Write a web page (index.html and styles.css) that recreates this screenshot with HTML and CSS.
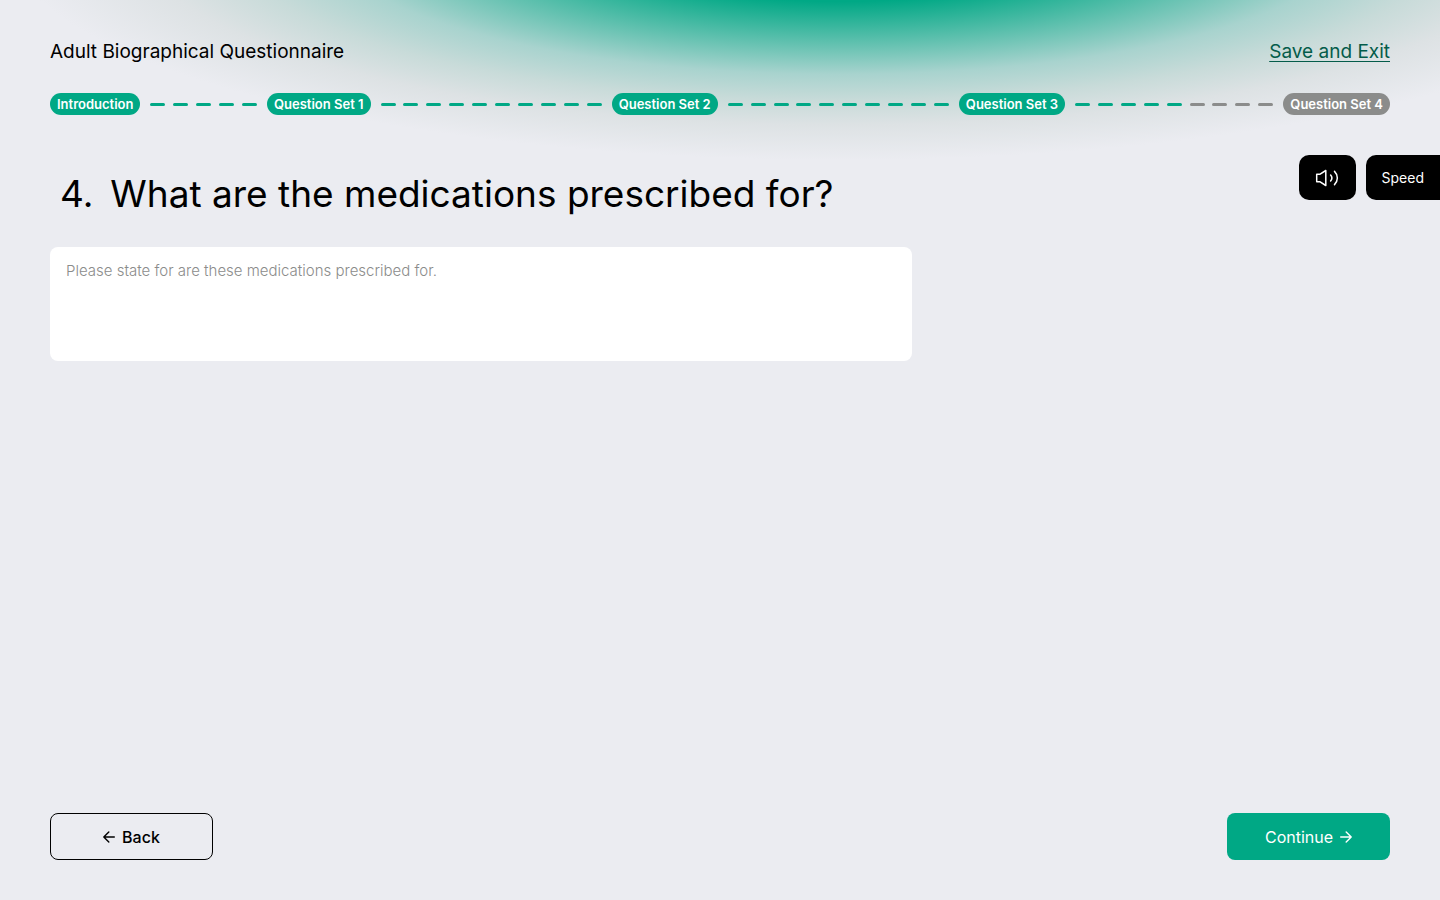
FILE: index.html
```html
<!DOCTYPE html>
<html lang="en">
<head>
<meta charset="utf-8">
<meta name="viewport" content="width=device-width, initial-scale=1">
<title>Adult Biographical Questionnaire</title>
<link rel="stylesheet" href="styles.css">
</head>
<body>
<div class="page">
  <header class="header">
    <div class="title">Adult Biographical Questionnaire</div>
    <a class="save" href="#">Save and Exit</a>
  </header>

  <nav class="progress" aria-label="Progress">
    <span class="step">Introduction</span>
    <span class="dashes short"><i></i><i></i><i></i><i></i><i></i></span>
    <span class="step">Question Set 1</span>
    <span class="dashes long"><i></i><i></i><i></i><i></i><i></i><i></i><i></i><i></i><i></i><i></i></span>
    <span class="step">Question Set 2</span>
    <span class="dashes long"><i></i><i></i><i></i><i></i><i></i><i></i><i></i><i></i><i></i><i></i></span>
    <span class="step">Question Set 3</span>
    <span class="dashes medium"><i></i><i></i><i></i><i></i><i></i><i class="todo"></i><i class="todo"></i><i class="todo"></i><i class="todo"></i></span>
    <span class="step todo">Question Set 4</span>
  </nav>

  <main class="main">
    <div class="question">
      <h1 class="heading"><span>4.</span><label for="answer">What are the medications prescribed for?</label></h1>
      <textarea class="answer" id="answer" placeholder="Please state for are these medications prescribed for."></textarea>
    </div>
    <div class="audio">
      <button class="audio-button" type="button" aria-label="Read aloud">
        <svg width="25" height="18" viewBox="0 0 25 18" fill="none" stroke="currentColor" stroke-width="1.5" stroke-linejoin="round" stroke-linecap="round">
          <path d="M1.7 5.2v7.6h3.4l5.7 3.7v-15L5.1 5.2z"/>
          <path d="M15.6 6c1.6 1.8 1.6 4.2 0 6"/>
          <path d="M19.5 2.4c3.8 3.8 3.8 9.4 0 13.2"/>
        </svg>
      </button>
      <button class="audio-button speed" type="button">Speed</button>
    </div>
  </main>

  <footer class="footer">
    <button class="button back" type="button">
      <svg width="12" height="12" viewBox="0 0 12 12" fill="none" stroke="currentColor" stroke-width="1.4" stroke-linecap="round" stroke-linejoin="round"><path d="M11.3 6H.8M5.8 1L.8 6l5 5"/></svg>
      Back
    </button>
    <button class="button continue" type="button">
      Continue
      <svg width="12" height="12" viewBox="0 0 12 12" fill="none" stroke="currentColor" stroke-width="1.4" stroke-linecap="round" stroke-linejoin="round"><path d="M.7 6h10.5M6.2 1l5 5-5 5"/></svg>
    </button>
  </footer>
</div>
</body>
</html>
```

FILE: styles.css
```css
* {
  box-sizing: border-box;
}

body {
  margin: 0;
  font-family: Inter, "Liberation Sans", sans-serif;
  color: #000;
  background: #ebecf1;
}

button,
textarea {
  font-family: inherit;
}

.page {
  display: flex;
  flex-direction: column;
  min-height: 100vh;
  padding: 39px 50px 40px;
  background: radial-gradient(ellipse 832px 220px at 840px -60px, #00a885 28%, #a8d3ce 61%, #c8dbd9 73%, #dde2e4 84%, #ebecf1 100%) no-repeat;
}

.header {
  display: flex;
  justify-content: space-between;
  font-size: 19px;
  line-height: 26px;
}

.save {
  color: #045c4a;
  text-underline-offset: 3px;
}

.progress {
  display: flex;
  align-items: center;
  gap: 10px;
  margin-top: 28px;
}

.step {
  padding: 0 7px;
  border-radius: 11px;
  background: #00a885;
  color: #fff;
  font-size: 13px;
  font-weight: 600;
  line-height: 22px;
  white-space: nowrap;
}

.dashes {
  display: flex;
  justify-content: space-between;
}

.dashes i {
  width: 15px;
  height: 3px;
  border-radius: 2px;
  background: #00a885;
}

.short {
  flex: 107;
}

.long {
  flex: 222;
}

.medium {
  flex: 199;
}

.step.todo,
.dashes .todo {
  background: #8b8c8b;
}

.main {
  display: flex;
  flex: 1;
  align-items: flex-start;
  justify-content: space-between;
  margin: 40px -50px 40px 0;
}

.question {
  flex: 0 1 862px;
}

.heading {
  display: flex;
  gap: 17px;
  margin: 14px 0 28px;
  padding-left: 10px;
  font-size: 37px;
  font-weight: 400;
  line-height: 50px;
}

.answer {
  display: block;
  width: 100%;
  height: 114px;
  padding: 12px 16px;
  border: 0;
  border-radius: 8px;
  background: #fff;
  font-size: 15px;
  font-weight: 300;
  line-height: 24px;
  resize: none;
}

.answer::placeholder {
  color: #8b8c8b;
}

.audio {
  display: flex;
  gap: 10px;
}

.audio-button {
  display: flex;
  align-items: center;
  justify-content: center;
  height: 45px;
  padding: 0 16px;
  border: 0;
  border-radius: 10px;
  background: #000;
  color: #fff;
  font-size: 14px;
}

.speed {
  border-radius: 10px 0 0 10px;
}

.footer {
  display: flex;
  justify-content: space-between;
}

.button {
  display: flex;
  align-items: center;
  justify-content: center;
  gap: 7px;
  width: 163px;
  height: 47px;
  border: 0;
  border-radius: 8px;
  font-size: 16px;
  font-weight: 500;
}

.back {
  border: 1px solid #000;
  background: transparent;
  color: #000;
}

.continue {
  background: #00a885;
  color: #fff;
  font-weight: 400;
}
```
